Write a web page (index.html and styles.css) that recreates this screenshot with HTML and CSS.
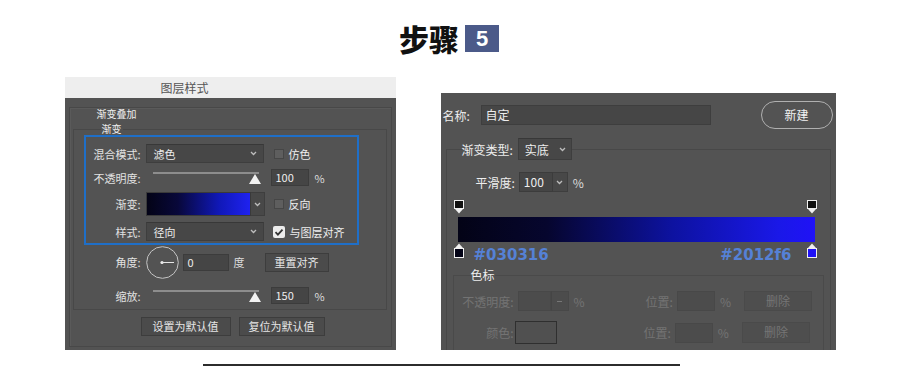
FILE: index.html
```html
<!DOCTYPE html>
<html lang="zh-CN">
<head>
<meta charset="utf-8">
<title>步骤 5</title>
<link rel="stylesheet" href="styles.css">
</head>
<body>
<div class="page">
  <header class="title">
    <span class="title-text">步骤</span>
    <span class="step-num">5</span>
  </header>

  <div class="panels">
    <section class="dlg dlg-left">
      <div class="dlg-titlebar">图层样式</div>
      <div class="dlg-body">
        <div class="outer">
          <div class="group-title">渐变叠加</div>
          <fieldset class="inner">
            <legend>渐变</legend>
            <div class="hl">
              <div class="row r19">
                <span class="lbl">混合模式:</span>
                <div class="select w118"><span>滤色</span><svg class="chev" width="7" height="5" viewBox="0 0 7 5"><path d="M1 1l2.5 2.5L6 1" fill="none" stroke="#bdbdbd" stroke-width="1.3"/></svg></div>
                <span class="cb"></span><span class="cbl">仿色</span>
              </div>
              <div class="row r17">
                <span class="lbl">不透明度:</span>
                <div class="slider"><div class="track"></div><svg class="knob" width="12" height="10" viewBox="0 0 12 10"><path d="M6 0L12 10H0z" fill="#f2f2f2"/></svg></div>
                <div class="field w38">100</div>
                <span class="unit">%</span>
              </div>
              <div class="row r24">
                <span class="lbl">渐变:</span>
                <div class="swatch"></div>
                <div class="swatch-dd"><svg width="7" height="5" viewBox="0 0 7 5"><path d="M1 1l2.5 2.5L6 1" fill="none" stroke="#bdbdbd" stroke-width="1.3"/></svg></div>
                <span class="cb cb-r"></span><span class="cbl">反向</span>
              </div>
              <div class="row r19">
                <span class="lbl">样式:</span>
                <div class="select w118"><span>径向</span><svg class="chev" width="7" height="5" viewBox="0 0 7 5"><path d="M1 1l2.5 2.5L6 1" fill="none" stroke="#bdbdbd" stroke-width="1.3"/></svg></div>
                <span class="cb cb-on"><svg width="12" height="12" viewBox="0 0 12 12"><path d="M2.5 6.2l2.4 2.4 4.6-5" fill="none" stroke="#333" stroke-width="1.8"/></svg></span><span class="cbl">与图层对齐</span>
              </div>
            </div>
            <div class="row angle-row">
              <span class="lbl">角度:</span>
              <svg class="dial" width="33" height="33" viewBox="0 0 33 33"><circle cx="16.5" cy="16.5" r="15.8" fill="none" stroke="#c4c4c4" stroke-width="1"/><circle cx="16" cy="16.5" r="1.6" fill="#eee"/><path d="M16 16.5H28" stroke="#e6e6e6" stroke-width="1"/></svg>
              <div class="field w46">0</div>
              <span class="unit-deg">度</span>
              <div class="btn btn-reset">重置对齐</div>
            </div>
            <div class="row r17 scale-row">
              <span class="lbl">缩放:</span>
              <div class="slider"><div class="track"></div><svg class="knob" width="12" height="10" viewBox="0 0 12 10"><path d="M6 0L12 10H0z" fill="#f2f2f2"/></svg></div>
              <div class="field w38">150</div>
              <span class="unit">%</span>
            </div>
          </fieldset>
          <div class="btn-row">
            <div class="btn btn-def1">设置为默认值</div>
            <div class="btn btn-def2">复位为默认值</div>
          </div>
        </div>
      </div>
    </section>

    <section class="dlg dlg-right">
      <div class="name-row">
        <span class="name-lbl">名称:</span>
        <div class="name-field">自定</div>
        <div class="pill">新建</div>
      </div>
      <fieldset class="gfs">
        <legend class="gfs-legend">
          <span class="rlbl">渐变类型:</span>
          <div class="select sel-type"><span>实底</span><svg class="chev" width="7" height="5" viewBox="0 0 7 5"><path d="M1 1l2.5 2.5L6 1" fill="none" stroke="#bdbdbd" stroke-width="1.3"/></svg></div>
        </legend>
        <div class="smooth-row">
          <span class="rlbl">平滑度:</span>
          <div class="field sm-field">100</div>
          <div class="sm-dd"><svg width="7" height="5" viewBox="0 0 7 5"><path d="M1 1l2.5 2.5L6 1" fill="none" stroke="#bdbdbd" stroke-width="1.3"/></svg></div>
          <span class="runit">%</span>
        </div>
        <div class="stops-top">
          <svg width="10" height="14" viewBox="0 0 10 14"><rect x="0.5" y="0.5" width="9" height="8" fill="#111" stroke="#f0f0f0"/><path d="M1 9h8l-4 4.5z" fill="#f0f0f0"/></svg>
          <svg width="10" height="14" viewBox="0 0 10 14"><rect x="0.5" y="0.5" width="9" height="8" fill="#111" stroke="#f0f0f0"/><path d="M1 9h8l-4 4.5z" fill="#f0f0f0"/></svg>
        </div>
        <div class="gbar"></div>
        <div class="stops-bottom">
          <svg width="10" height="15" viewBox="0 0 10 15"><path d="M5 0.5L9 5H1z" fill="#f0f0f0"/><rect x="0.5" y="5.5" width="9" height="9" fill="#030316" stroke="#f0f0f0"/></svg>
          <span class="hex hex-l">#030316</span>
          <span class="hex hex-r">#2012f6</span>
          <svg width="10" height="15" viewBox="0 0 10 15"><path d="M5 0.5L9 5H1z" fill="#f0f0f0"/><rect x="0.5" y="5.5" width="9" height="9" fill="#2012f6" stroke="#f0f0f0"/></svg>
        </div>
        <fieldset class="sfs">
          <legend>色标</legend>
          <div class="srow srow1">
            <span class="glbl">不透明度:</span>
            <div class="gfield g33"></div>
            <div class="gdd"><svg width="7" height="5" viewBox="0 0 7 5"><path d="M1 2.5h5" stroke="#777" stroke-width="1"/></svg></div>
            <span class="gunit">%</span>
            <span class="glbl pos1">位置:</span>
            <div class="gfield g38"></div>
            <span class="gunit">%</span>
            <div class="gbtn">删除</div>
          </div>
          <div class="srow srow2">
            <span class="glbl">颜色:</span>
            <div class="gcolor"></div>
            <span class="glbl pos2">位置:</span>
            <div class="gfield g38"></div>
            <span class="gunit">%</span>
            <div class="gbtn">删除</div>
          </div>
        </fieldset>
      </fieldset>
    </section>
  </div>

  <div class="rule"></div>
</div>
</body>
</html>
```

FILE: styles.css
```css
* { box-sizing: border-box; }

html, body {
  margin: 0;
  padding: 0;
  background: #fff;
}

body {
  width: 900px;
  height: 366px;
  overflow: hidden;
  font-family: "Noto Sans CJK SC", "Noto Sans", sans-serif;
  color: #e6e6e6;
}

.page {
  width: 900px;
  height: 366px;
}

/* ---------- title ---------- */
.title {
  height: 77px;
  padding-top: 20px;
  display: flex;
  justify-content: center;
  align-items: flex-start;
}
.title-text {
  height: 36px;
  line-height: 36px;
  font-size: 30px;
  font-weight: 900;
  color: #111;
  margin-left: -2px;
}
.step-num {
  margin-left: 6px;
  margin-top: 5px;
  width: 34px;
  height: 27px;
  background: #4b5a89;
  color: #fff;
  font-family: "Liberation Sans", Arial, sans-serif;
  font-weight: bold;
  font-size: 22px;
  line-height: 27px;
  text-align: center;
}

/* ---------- panels ---------- */
.panels {
  height: 273px;
  display: flex;
  justify-content: center;
  align-items: flex-end;
  gap: 45px;
}

.dlg {
  background: #535353;
  font-size: 11px;
  overflow: hidden;
}

.dlg-left {
  width: 331px;
  height: 273px;
  display: flex;
  flex-direction: column;
}

.dlg-titlebar {
  height: 21px;
  background: #eeeeee;
  color: #555;
  font-size: 12px;
  line-height: 21px;
  padding-left: 96px;
}

.dlg-body {
  flex: 1;
  padding: 9px 4px 0 4px;
  overflow: hidden;
}

.outer {
  height: 240px;
  border: 1px solid #484848;
  box-shadow: inset 1px 1px 0 #5a5a5a;
}

.group-title {
  margin: 0 0 0 27px;
  height: 12px;
  line-height: 12px;
  font-size: 10px;
  color: #eee;
}

.inner {
  margin: 2px 4px 0 3px;
  padding: 0 0 5px 0;
  border: 1px solid #484848;
  min-width: 0;
}
.inner legend {
  margin-left: 27px;
  padding: 0 1px;
  font-size: 10px;
  line-height: 14px;
  height: 14px;
  color: #eee;
}

.hl {
  margin: -1px 27px 0 10px;
  border: 2px solid #1f6fc8;
  padding: 7px 0 2px 0;
  display: flex;
  flex-direction: column;
  gap: 6px;
}

.row {
  display: flex;
  align-items: center;
}
.r19 { height: 19px; }
.r17 { height: 17px; }
.r24 { height: 24px; }

.lbl {
  width: 55px;
  margin-right: 5px;
  text-align: right;
  white-space: nowrap;
  color: #e2e2e2;
  font-size: 11px;
}

.select {
  height: 19px;
  background: #474747;
  border: 1px solid #3e3e3e;
  border-top-color: #383838;
  display: flex;
  align-items: center;
  justify-content: space-between;
  padding: 0 6px 0 7px;
  color: #eee;
  font-size: 11px;
}
.w118 { width: 118px; }
.chev { flex: none; }

.cb {
  width: 10px;
  height: 10px;
  margin-left: 10px;
  background: #5e5e5e;
  border: 1px solid #464646;
  flex: none;
}
.cb-r { margin-left: 9px; }
.cb-on {
  width: 12px;
  height: 12px;
  margin-left: 9px;
  background: #ececec;
  border: none;
  border-radius: 2px;
  display: flex;
}
.cbl {
  margin-left: 5px;
  color: #eee;
  font-size: 11px;
}

.slider {
  position: relative;
  width: 118px;
  height: 17px;
  padding: 3px 5px 0 7px;
}
.track {
  height: 2px;
  background: #8d8d8d;
}
.knob {
  position: absolute;
  left: 103px;
  top: 5px;
}

.field {
  height: 17px;
  background: #454545;
  border: 1px solid #3c3c3c;
  color: #eee;
  font-size: 11px;
  line-height: 15px;
  padding-left: 4px;
}
.w38 { width: 38px; margin-left: 7px; }
.w46 { width: 46px; margin-left: 4px; }

.unit {
  margin-left: 6px;
  color: #ddd;
  font-size: 11px;
}

.swatch {
  width: 105px;
  height: 24px;
  background: linear-gradient(to right, #030316 0%, #08083a 30%, #1018b8 70%, #1f22f0 100%);
  border: 1px solid #3a3a3a;
}
.swatch-dd {
  width: 14px;
  height: 24px;
  background: #484848;
  border: 1px solid #3e3e3e;
  border-left: none;
  display: flex;
  align-items: center;
  justify-content: center;
}

.angle-row {
  height: 32px;
  margin-top: 1px;
  padding-left: 12px;
}
.dial { flex: none; }
.unit-deg {
  margin-left: 5px;
  color: #ddd;
  font-size: 11px;
}

.btn {
  height: 19px;
  background: #4b4b4b;
  border: 1px solid #3d3d3d;
  color: #e6e6e6;
  font-size: 11px;
  line-height: 17px;
  text-align: center;
}
.btn-reset {
  width: 64px;
  margin-left: 20px;
}

.scale-row {
  margin-top: 9px;
  padding-left: 12px;
}

.btn-row {
  display: flex;
  gap: 8px;
  margin-top: 7px;
  padding-left: 71px;
}
.btn-def1 { width: 90px; }
.btn-def2 { width: 86px; }

/* ---------- right dialog ---------- */
.dlg-right {
  width: 395px;
  height: 257px;
  padding: 8px 3px 0 2px;
  font-size: 12px;
}

.name-row {
  height: 28px;
  display: flex;
  align-items: center;
}
.name-lbl {
  width: 38px;
  color: #eee;
  font-size: 12px;
}
.name-field {
  width: 230px;
  height: 20px;
  background: #464646;
  border: 1px solid #3e3e3e;
  color: #eee;
  font-size: 12px;
  line-height: 18px;
  padding-left: 4px;
}
.pill {
  margin-left: 50px;
  width: 72px;
  height: 28px;
  border: 1px solid #b0b0b0;
  border-radius: 14px;
  color: #f2f2f2;
  font-size: 12px;
  line-height: 26px;
  text-align: center;
}

.gfs {
  margin: 9px 2px 0 3px;
  padding: 0;
  border: 1px solid #484848;
  min-width: 0;
  height: 240px;
}
.gfs-legend {
  margin-left: 15px;
  padding: 0;
  display: flex;
  align-items: center;
  height: 22px;
}
.rlbl {
  color: #eee;
  font-size: 12px;
}
.sel-type {
  width: 54px;
  height: 22px;
  margin-left: 5px;
  font-size: 12px;
  padding: 0 5px 0 6px;
}

.smooth-row {
  display: flex;
  align-items: center;
  height: 20px;
  margin-top: 12px;
  padding-left: 29px;
}
.sm-field {
  width: 34px;
  height: 20px;
  margin-left: 4px;
  font-size: 12px;
  line-height: 18px;
}
.sm-dd {
  width: 15px;
  height: 20px;
  background: #484848;
  border: 1px solid #3e3e3e;
  border-left: none;
  display: flex;
  align-items: center;
  justify-content: center;
}
.runit {
  margin-left: 5px;
  color: #ddd;
  font-size: 12px;
}

.stops-top {
  display: flex;
  justify-content: space-between;
  margin: 8px 13px 0 7px;
  height: 14px;
}
.stops-top svg, .stops-bottom svg { flex: none; display: block; }

.gbar {
  margin: 3px 15px 0 11px;
  height: 25px;
  background: linear-gradient(to right, #030316 0%, #06062e 25%, #0d12a0 60%, #1a18e8 90%, #2012f6 100%);
}

.stops-bottom {
  display: flex;
  align-items: flex-end;
  margin: 1px 13px 0 7px;
  height: 15px;
}
.hex {
  font-family: "DejaVu Sans", sans-serif;
  font-weight: bold;
  font-size: 15px;
  line-height: 15px;
  color: #5581d6;
  margin-bottom: -5px;
}
.hex-l { margin-left: 10px; }
.hex-r { margin-left: auto; margin-right: 15px; }

.sfs {
  margin: 10px 6px 0 6px;
  padding: 0;
  border: 1px solid #4a4a4a;
  min-width: 0;
  height: 120px;
}
.sfs legend {
  margin-left: 17px;
  padding: 0;
  font-size: 12px;
  line-height: 14px;
  color: #eee;
}

.srow {
  display: flex;
  align-items: center;
}
.srow1 { height: 20px; margin-top: 9px; }
.srow2 { height: 23px; margin-top: 10px; }

.glbl {
  width: 60px;
  text-align: right;
  color: #737373;
  font-size: 12px;
  white-space: nowrap;
}
.pos1, .pos2 { width: auto; }
.pos1 { margin-left: 61px; }
.pos2 { margin-left: 87px; }

.gfield {
  height: 20px;
  background: #4c4c4c;
  border: 1px solid #484848;
  margin-left: 4px;
}
.g33 { width: 33px; }
.g38 { width: 38px; }
.gdd {
  width: 18px;
  height: 20px;
  background: #4c4c4c;
  border: 1px solid #484848;
  border-left-color: #454545;
  display: flex;
  align-items: center;
  justify-content: center;
}
.gunit {
  margin-left: 5px;
  color: #737373;
  font-size: 12px;
}
.gbtn {
  margin-left: 13px;
  width: 68px;
  height: 20px;
  background: #4e4e4e;
  border: 1px solid #4a4a4a;
  color: #757575;
  font-size: 12px;
  line-height: 18px;
  text-align: center;
}
.srow2 .gbtn { height: 21px; }
.gcolor {
  width: 42px;
  height: 23px;
  margin-left: 1px;
  background: #505050;
  border: 1px solid #2f2f2f;
}

.rule {
  margin: 14px 0 0 203px;
  width: 477px;
  height: 2px;
  background: #2c2c2c;
}
```
